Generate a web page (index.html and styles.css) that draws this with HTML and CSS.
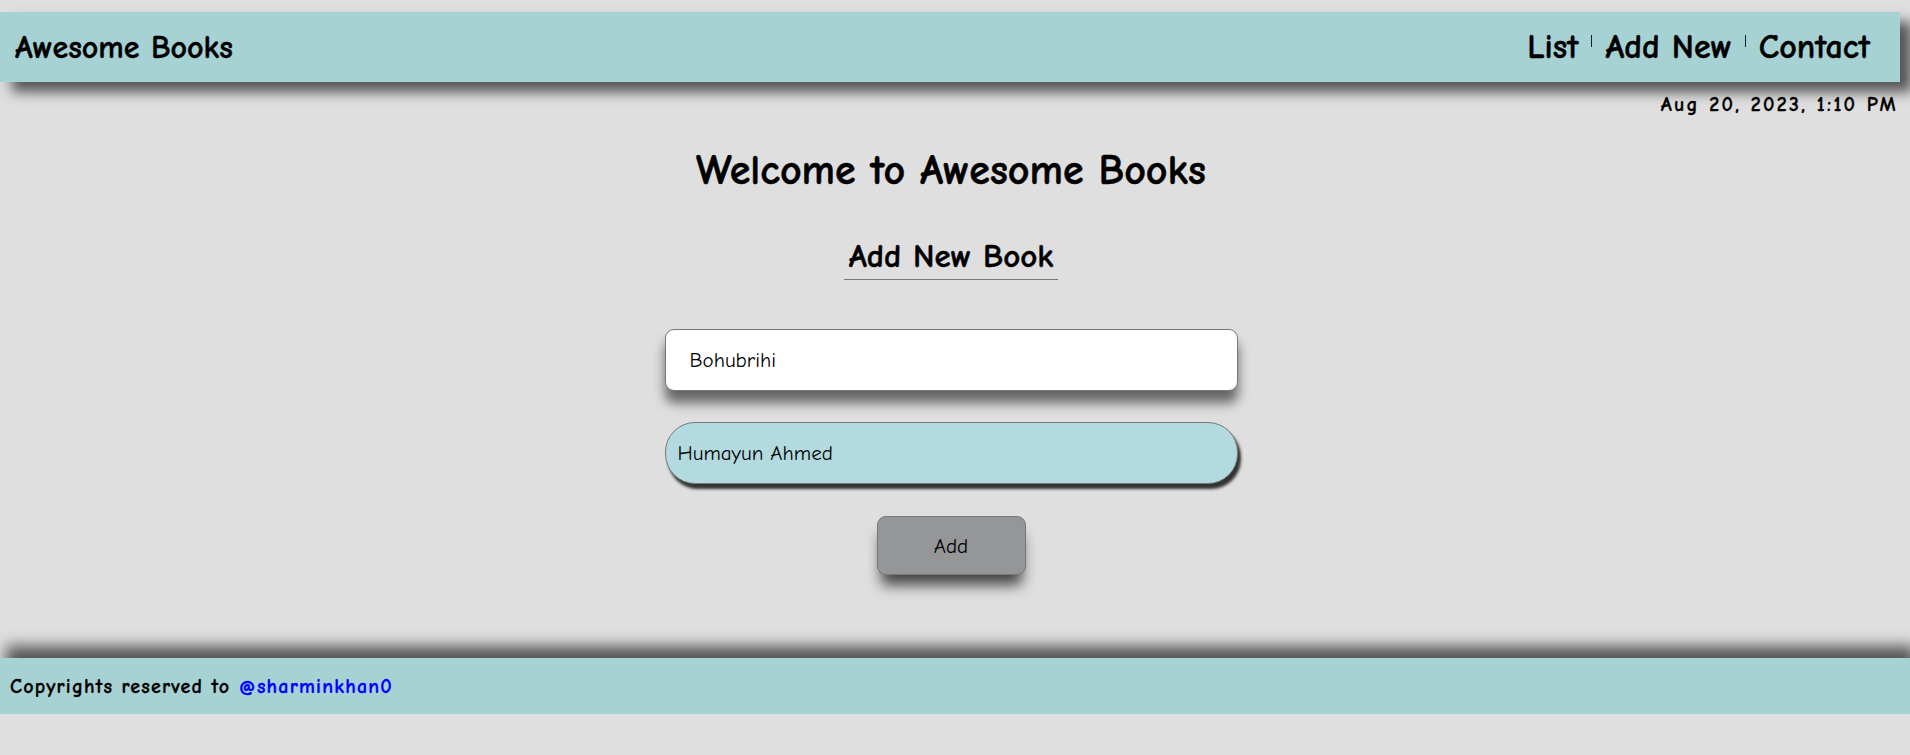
FILE: index.html
```html
<!DOCTYPE html>
<html lang="en">
<head>
<meta charset="utf-8">
<title>Awesome Books</title>
<link rel="stylesheet" href="styles.css">
</head>
<body>
<header class="navbar">
  <a class="logo" href="#">Awesome Books</a>
  <nav class="nav">
    <a class="nav-link" href="#">List</a>
    <span class="sep"></span>
    <a class="nav-link" href="#">Add New</a>
    <span class="sep"></span>
    <a class="nav-link" href="#">Contact</a>
  </nav>
</header>
<p class="date">Aug 20, 2023, 1:10 PM</p>
<main class="main">
  <h1 class="title">Welcome to Awesome Books</h1>
  <h2 class="subtitle">Add New Book</h2>
  <form class="form">
    <input class="field field-title" type="text" value="Bohubrihi">
    <input class="field field-author" type="text" value="Humayun Ahmed">
    <button class="add-btn" type="button">Add</button>
  </form>
</main>
<footer class="footer">
  <p class="copy">Copyrights reserved to <a class="handle" href="#">@sharminkhan0</a></p>
</footer>
</body>
</html>
```
FILE: styles.css
```css
* { box-sizing: border-box; }

body {
  margin: 0;
  background: #e0dfe0;
  font-family: "Comic Sans MS", "Comic Neue", "Noto Sans", sans-serif;
  color: #000;
}

.navbar {
  margin: 12px 10px 0 0;
  height: 70px;
  background: #a6d2d4;
  display: flex;
  align-items: center;
  justify-content: space-between;
  padding: 0 30px 0 15px;
  box-shadow: 12px 10px 12px #555;
}

.logo {
  color: #000;
  text-decoration: none;
  font-weight: 700;
  font-size: 32px;
  -webkit-text-stroke: 0.4px #000;
}

.nav {
  display: flex;
  align-items: center;
  gap: 13px;
}

.nav-link {
  color: #000;
  text-decoration: none;
  font-weight: 700;
  font-size: 34px;
  -webkit-text-stroke: 0.4px #000;
}

.sep {
  width: 1px;
  height: 12px;
  background: #0a1a3a;
  margin-top: -12px;
}

.date {
  margin: 10px 12px 0 0;
  text-align: right;
  font-weight: 700;
  font-size: 20px;
  letter-spacing: 2.3px;
  line-height: 26px;
  -webkit-text-stroke: 0.3px #000;
}

.main {
  display: flex;
  flex-direction: column;
  align-items: center;
  padding-right: 8px;
}

.title {
  margin: 28px 0 0;
  font-size: 42px;
  line-height: 50px;
  font-weight: 700;
  -webkit-text-stroke: 0.5px #000;
}

.subtitle {
  margin: 41px 0 0;
  font-size: 33px;
  line-height: 38px;
  font-weight: 700;
  padding: 0 5px 4px;
  border-bottom: 1px solid #777;
  -webkit-text-stroke: 0.4px #000;
}

.form {
  margin-top: 49px;
  display: flex;
  flex-direction: column;
  align-items: center;
  gap: 31px;
}

.field {
  width: 573px;
  height: 62px;
  border: 1px solid #777;
  font-family: inherit;
  font-size: 21px;
  color: #000;
  outline: none;
}

.field-title {
  background: #fff;
  border-radius: 9px;
  padding: 0 24px;
  box-shadow: 0 12px 12px #666;
}

.field-author {
  background: #b3dade;
  border-radius: 30px;
  padding: 0 12px;
  box-shadow: 3px 5px 3px #333;
}

.add-btn {
  margin-top: 1px;
  width: 149px;
  height: 59px;
  background: #959698;
  border: 1px solid #777;
  border-radius: 9px;
  font-family: inherit;
  font-size: 21px;
  color: #000;
  box-shadow: 0 14px 14px -4px #444;
}

.footer {
  margin-top: 83px;
  height: 56px;
  background: #a6d2d4;
  display: flex;
  align-items: center;
  padding: 0 10px;
  box-shadow: 6px -12px 14px #555;
}

.copy {
  margin: 0;
  font-weight: 700;
  font-size: 20px;
  letter-spacing: 1.2px;
  -webkit-text-stroke: 0.3px #000;
}

.handle {
  color: #00f;
  text-decoration: none;
  -webkit-text-stroke: 0.3px #00f;
}
```
